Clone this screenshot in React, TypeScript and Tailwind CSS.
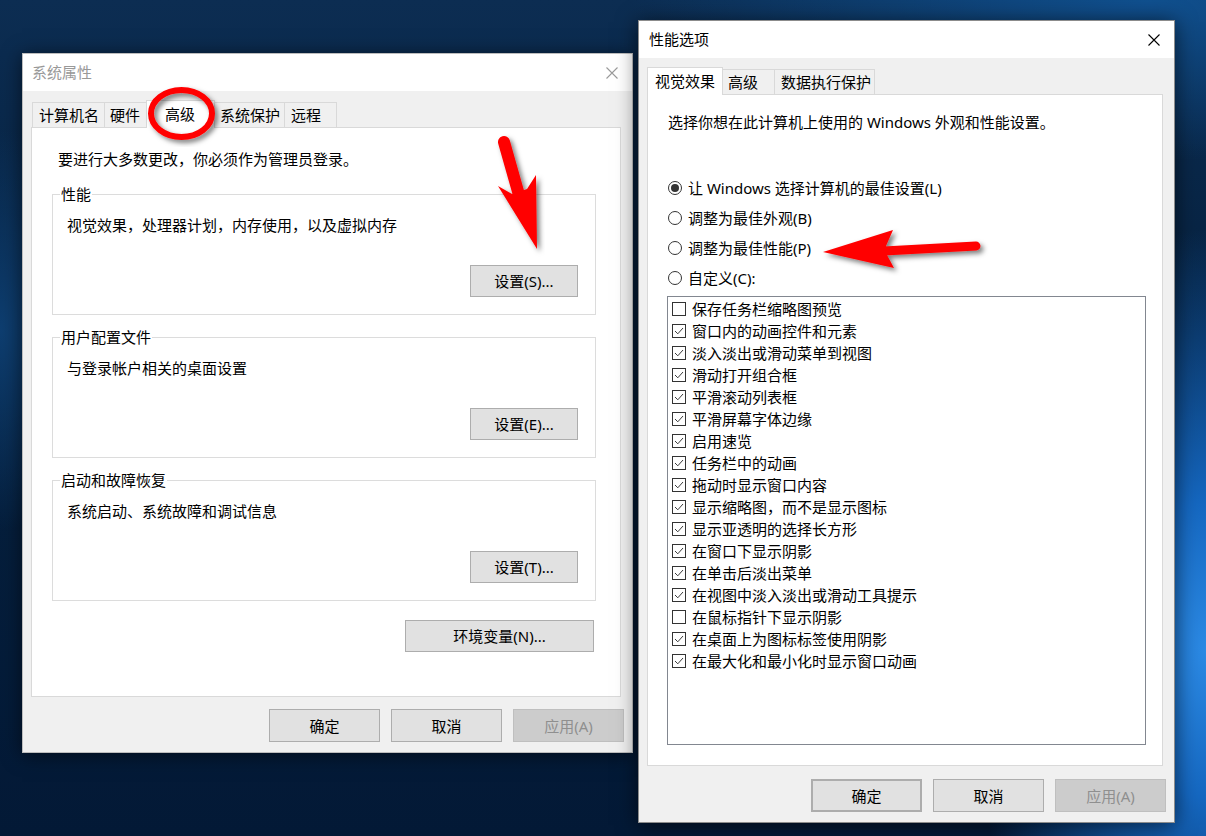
import type { ReactNode } from 'react';

const visualOptions: [string, boolean][] = [
  ['保存任务栏缩略图预览', false],
  ['窗口内的动画控件和元素', true],
  ['淡入淡出或滑动菜单到视图', true],
  ['滑动打开组合框', true],
  ['平滑滚动列表框', true],
  ['平滑屏幕字体边缘', true],
  ['启用速览', true],
  ['任务栏中的动画', true],
  ['拖动时显示窗口内容', true],
  ['显示缩略图，而不是显示图标', true],
  ['显示亚透明的选择长方形', true],
  ['在窗口下显示阴影', true],
  ['在单击后淡出菜单', true],
  ['在视图中淡入淡出或滑动工具提示', true],
  ['在鼠标指针下显示阴影', false],
  ['在桌面上为图标标签使用阴影', true],
  ['在最大化和最小化时显示窗口动画', true],
];

function CloseIcon({ className }: { className: string }) {
  return (
    <svg width="12" height="12" viewBox="0 0 12 12" className={className}>
      <path d="M0.5 0.5L11.5 11.5M11.5 0.5L0.5 11.5" stroke="currentColor" strokeWidth="1.1" fill="none" />
    </svg>
  );
}

function Button({ children, className = '' }: { children: ReactNode; className?: string }) {
  return (
    <div className={`flex items-center justify-center bg-[#e1e1e1] border border-[#adadad] text-black leading-[20px] ${className}`}>
      {children}
    </div>
  );
}

function DisabledButton({ children }: { children: ReactNode }) {
  return (
    <div className="w-[111px] h-[33px] flex items-center justify-center bg-[#cccccc] border border-[#bfbfbf] text-[#8f8f8f] leading-[20px]">
      {children}
    </div>
  );
}

function Tab({ label, className }: { label: string; className: string }) {
  return (
    <div className={`h-[25px] flex items-center bg-[#f0f0f0] border border-b-0 border-[#d9d9d9] leading-[20px] ${className}`}>
      {label}
    </div>
  );
}

function ActiveTab({ label, className }: { label: string; className: string }) {
  return (
    <div className={`relative z-10 -mb-px h-[28px] flex items-center pb-[2px] bg-white border border-b-0 border-[#d9d9d9] leading-[20px] ${className}`}>
      {label}
    </div>
  );
}

function Group({ title, text, button }: { title: string; text: string; button: string }) {
  return (
    <fieldset className="flex flex-col border border-[#dcdcdc] pl-[14px] pr-[17px] pt-[11px] pb-[17px]">
      <legend className="-ml-[7px] px-[1px] leading-[20px]">{title}</legend>
      <p className="leading-[20px]">{text}</p>
      <Button className="self-end mt-[30px] w-[108px] h-[32px]">{button}</Button>
    </fieldset>
  );
}

function Radio({ label, checked = false }: { label: string; checked?: boolean }) {
  return (
    <div className="h-[20px] flex items-center gap-[6px] leading-[20px]">
      <span className="w-[14px] h-[14px] rounded-full border border-[#333] bg-white flex items-center justify-center">
        {checked && <span className="w-[8px] h-[8px] rounded-full bg-[#333]" />}
      </span>
      {label}
    </div>
  );
}

function CheckRow({ label, checked }: { label: string; checked: boolean }) {
  return (
    <div className="h-[22px] flex items-center gap-[6px] leading-[20px]">
      <span className="w-[14px] h-[14px] border border-[#333] bg-white flex items-center justify-center">
        {checked && (
          <svg width="12" height="12" viewBox="0 0 12 12">
            <path d="M2 6L4.8 8.8L10 3" stroke="#3a3a3a" strokeWidth="1" fill="none" />
          </svg>
        )}
      </span>
      {label}
    </div>
  );
}

// 系统属性 → 高级
function SystemProperties() {
  return (
    <div className="absolute left-[22px] top-[53px] w-[611px] h-[700px] flex flex-col bg-[#f0f0f0] border border-[#bdbdbd] shadow-[0_2px_18px_rgba(0,0,0,0.55)]">
      <div className="h-[37px] shrink-0 bg-white flex items-center justify-between pl-[9px] pr-[14px]">
        <span className="leading-[20px] text-[#999] -mt-[2px]">系统属性</span>
        <CloseIcon className="text-[#9a9a9a]" />
      </div>

      <div className="flex items-end h-[27px] mt-[9px] ml-[9px]">
        <Tab label="计算机名" className="w-[73px] pl-[6px]" />
        <Tab label="硬件" className="-ml-px w-[43px] pl-[5px]" />
        <ActiveTab label="高级" className="-ml-px w-[69px] pl-[18px]" />
        <Tab label="系统保护" className="-ml-px w-[71px] pl-[5px]" />
        <Tab label="远程" className="-ml-px w-[53px] pl-[6px]" />
      </div>

      <div className="ml-[8px] w-[590px] h-[570px] bg-white border border-[#d9d9d9] flex flex-col pt-[21px]">
        <p className="pl-[26px] leading-[20px]">要进行大多数更改，你必须作为管理员登录。</p>
        <div className="ml-[20px] w-[544px] mt-[15px] flex flex-col gap-[12px]">
          <Group title="性能" text="视觉效果，处理器计划，内存使用，以及虚拟内存" button="设置(S)..." />
          <Group title="用户配置文件" text="与登录帐户相关的桌面设置" button="设置(E)..." />
          <Group title="启动和故障恢复" text="系统启动、系统故障和调试信息" button="设置(T)..." />
        </div>
        <Button className="self-end mr-[26px] mt-[19px] w-[189px] h-[32px]">环境变量(N)...</Button>
      </div>

      <div className="flex justify-end gap-[11px] mt-[12px] pr-[8px]">
        <Button className="w-[111px] h-[33px]">确定</Button>
        <Button className="w-[111px] h-[33px]">取消</Button>
        <DisabledButton>应用(A)</DisabledButton>
      </div>
    </div>
  );
}

// 性能选项 → 视觉效果
function PerformanceOptions() {
  return (
    <div className="absolute left-[638px] top-[20px] w-[537px] h-[803px] flex flex-col bg-[#f0f0f0] border border-[#8c8c8c] shadow-[0_2px_20px_rgba(0,0,0,0.6)]">
      <div className="h-[37px] shrink-0 bg-white flex items-center justify-between pl-[10px] pr-[14px]">
        <span className="leading-[20px] text-black -mt-[2px]">性能选项</span>
        <CloseIcon className="text-black" />
      </div>

      <div className="flex items-end h-[27px] mt-[9px] ml-[8px]">
        <ActiveTab label="视觉效果" className="w-[76px] pl-[7px]" />
        <Tab label="高级" className="-ml-px w-[53px] pl-[5px]" />
        <Tab label="数据执行保护" className="-ml-px w-[101px] pl-[6px]" />
      </div>

      <div className="ml-[8px] w-[516px] h-[672px] bg-white border border-[#d9d9d9] flex flex-col pt-[17px] pl-[20px]">
        <p className="leading-[20px]">选择你想在此计算机上使用的 Windows 外观和性能设置。</p>
        <div className="mt-[46px] flex flex-col gap-[10px]">
          <Radio label="让 Windows 选择计算机的最佳设置(L)" checked />
          <Radio label="调整为最佳外观(B)" />
          <Radio label="调整为最佳性能(P)" />
          <Radio label="自定义(C):" />
        </div>
        <div className="mt-[8px] -ml-px w-[479px] h-[449px] border border-[#828790] pt-[1px] pl-[4px] flex flex-col">
          {visualOptions.map(([label, checked]) => (
            <CheckRow key={label} label={label} checked={checked} />
          ))}
        </div>
      </div>

      <div className="flex justify-end gap-[11px] mt-[13px] pr-[8px]">
        <Button className="w-[111px] h-[33px] border-2 border-[#0078d7]">确定</Button>
        <Button className="w-[111px] h-[33px]">取消</Button>
        <DisabledButton>应用(A)</DisabledButton>
      </div>
    </div>
  );
}

function Markup() {
  return (
    <svg className="absolute inset-0 z-20 pointer-events-none" width="1206" height="836" viewBox="0 0 1206 836">
      <defs>
        <filter id="shade" x="-20%" y="-20%" width="140%" height="140%">
          <feDropShadow dx="3" dy="3" stdDeviation="2.5" floodColor="#000" floodOpacity="0.5" />
        </filter>
      </defs>
      {/* ring round the tab */}
      <ellipse cx="181.5" cy="113.5" rx="30.5" ry="23.5" fill="none" stroke="#ff0000" strokeWidth="6" filter="url(#shade)" />
      {/* arrow down to 设置(S) */}
      <g filter="url(#shade)" fill="#ff0000">
        <path d="M504 142L519 195" stroke="#ff0000" strokeWidth="12" strokeLinecap="round" />
        <path d="M498 186L512 194L527 189L536 175L537 249Z" />
      </g>
      {/* arrow left to 调整为最佳性能 */}
      <g filter="url(#shade)" fill="#ff0000">
        <path d="M884 251L976 246" stroke="#ff0000" strokeWidth="9" strokeLinecap="round" />
        <path d="M823 252L893 230L886 246L887 255L894 268Z" />
      </g>
    </svg>
  );
}

export default function App() {
  return (
    <div className="relative w-[1206px] h-[836px] overflow-hidden text-[15px] text-black font-['Noto_Sans','Noto_Sans_CJK_SC',sans-serif] bg-[radial-gradient(ellipse_240px_420px_at_1206px_650px,#2c8ae4_0%,#1567c0_35%,rgba(10,60,120,0)_100%),radial-gradient(ellipse_520px_160px_at_1150px_0px,#10508f_0%,rgba(12,60,110,0)_100%),radial-gradient(ellipse_120px_200px_at_0px_330px,#0e3e70_0%,rgba(10,50,90,0)_100%),linear-gradient(180deg,#0c2d52_0%,#06213f_40%,#031936_100%)]">
      <SystemProperties />
      <PerformanceOptions />
      <Markup />
    </div>
  );
}
